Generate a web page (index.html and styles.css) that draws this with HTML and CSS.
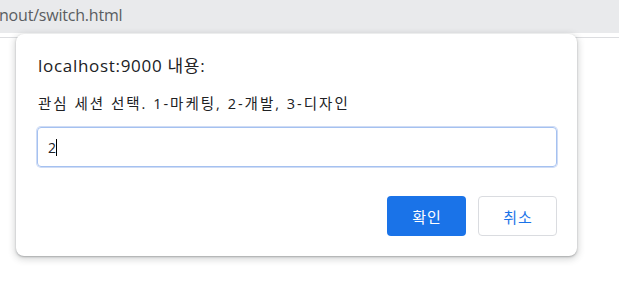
FILE: index.html
```html
<!DOCTYPE html>
<html lang="ko">
<head>
<meta charset="utf-8">
<title>switch</title>
<link rel="stylesheet" href="styles.css">
</head>
<body>
  <div class="toolbar">
    <span class="url">nout/switch.html</span>
  </div>
  <div class="page"></div>

  <div class="dialog" role="dialog">
    <div class="title">localhost:9000 내용:</div>
    <div class="message">관심 세션 선택. 1-마케팅, 2-개발, 3-디자인</div>
    <div class="field"><span class="value">2</span><span class="caret"></span></div>
    <div class="actions">
      <button class="btn btn-primary">확인</button>
      <button class="btn btn-secondary">취소</button>
    </div>
  </div>
</body>
</html>
```

FILE: styles.css
```css
* { box-sizing: border-box; }

html, body {
  margin: 0;
  padding: 0;
  background: #ffffff;
  width: 619px;
  height: 291px;
  overflow: hidden;
  font-family: "Open Sans", "Noto Sans CJK KR", sans-serif;
}

.toolbar {
  height: 33px;
  background: #e9eaec;
  display: flex;
  align-items: center;
  padding-bottom: 4px;
}

.url {
  font-size: 16px;
  color: #5a5d61;
  margin-left: -1px;
  letter-spacing: -0.2px;
}

.page {
  margin-top: 4px;
  border-top: 1px solid #dcdde0;
}

.dialog {
  position: absolute;
  left: 16px;
  top: 34px;
  width: 561px;
  height: 222px;
  background: #ffffff;
  border-radius: 8px;
  box-shadow: 0 1px 2px rgba(60, 64, 67, 0.35), 0 2px 6px 2px rgba(60, 64, 67, 0.18);
  padding: 20px 20px 20px 21px;
  display: flex;
  flex-direction: column;
}

.title {
  font-size: 17px;
  line-height: 24px;
  letter-spacing: 0.7px;
  color: #202124;
  padding-left: 1px;
}

.message {
  margin-top: 16px;
  font-size: 14.5px;
  line-height: 20px;
  letter-spacing: 2px;
  color: #202124;
  padding-left: 1px;
}

.field {
  margin-top: 13px;
  height: 40px;
  border: 1px solid #a5c1f0;
  border-radius: 4px;
  box-shadow: 0 0 0 1px #cfdcf5;
  display: flex;
  align-items: center;
  padding-left: 10px;
  font-size: 14px;
  color: #202124;
}

.caret {
  display: inline-block;
  width: 1px;
  height: 17px;
  background: #000;
}

.actions {
  margin-top: auto;
  display: flex;
  justify-content: flex-end;
  gap: 12px;
}

.btn {
  width: 79px;
  height: 40px;
  border-radius: 4px;
  font-family: "Noto Sans CJK KR", sans-serif;
  font-size: 15px;
  letter-spacing: 1px;
  padding: 0 0 0 1px;
  cursor: pointer;
}

.btn-primary {
  background: #1a73e8;
  color: #ffffff;
  border: none;
}

.btn-secondary {
  background: #ffffff;
  color: #1a73e8;
  border: 1px solid #dadce0;
}
```
